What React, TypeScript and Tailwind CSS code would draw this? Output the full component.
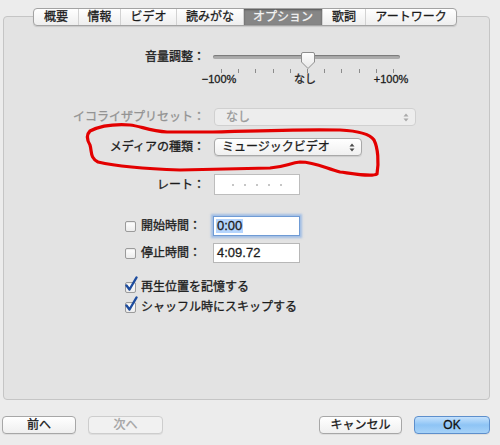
import React from 'react';

const tabs = [
  { label: '概要', w: 'w-[44px]' },
  { label: '情報', w: 'w-[42px]' },
  { label: 'ビデオ', w: 'w-[56px]' },
  { label: '読みがな', w: 'w-[67px]' },
  { label: 'オプション', w: 'w-[79px]', active: true },
  { label: '歌詞', w: 'w-[43px]' },
  { label: 'アートワーク', w: 'w-[91px]' },
];

const Arrows = ({ color }: { color: string }) => (
  <svg width="6" height="9" viewBox="0 0 6 9" className="shrink-0">
    <path d="M3 0.5 L5.5 3.5 H0.5 Z" fill={color} />
    <path d="M3 8.5 L5.5 5.5 H0.5 Z" fill={color} />
  </svg>
);

const Checkbox = ({ checked }: { checked?: boolean }) => (
  <div className="relative w-[11px] h-[11px] shrink-0 rounded-[2px] border border-[#9b9b9b] bg-gradient-to-b from-white to-[#ececec] shadow-[inset_0_1px_1px_rgba(0,0,0,0.08)]">
    {checked && (
      <svg width="14" height="16" viewBox="0 0 14 16" className="absolute -left-[2px] -top-[7px]">
        <path d="M2.5 9.5 L5.5 13.5 L12.5 1.5" fill="none" stroke="#1d4c9e" strokeWidth="2.4" strokeLinecap="round" strokeLinejoin="round" />
      </svg>
    )}
  </div>
);

const Button = ({ children, width, disabled, primary }: { children: React.ReactNode; width: string; disabled?: boolean; primary?: boolean }) => {
  const look = primary
    ? 'border-[#5d8fcc] bg-gradient-to-b from-[#c4e1fc] via-[#8ec4f5] to-[#a6d2f8] text-[#111]'
    : disabled
      ? 'border-[#cdcdcd] bg-[#f1f1f1] text-[#a3a3a3]'
      : 'border-[#a7a7a7] bg-gradient-to-b from-white to-[#efefef] text-[#1a1a1a]';
  return (
    <button className={`${width} h-[18px] rounded-[4px] border ${look} shadow-[0_1px_0_rgba(0,0,0,0.06)] text-[12px] leading-[16px]`}>
      {children}
    </button>
  );
};

export default function App() {
  return (
    <div className="relative w-[500px] h-[445px] overflow-hidden bg-[#ececec] text-[12px] text-[#1c1c1c] [-webkit-text-stroke:0.3px] font-['Liberation_Sans','Noto_Sans_CJK_JP',sans-serif]">
      <div className="pt-[16px] pl-[3px] pr-[10px]">
        <div className="h-[384px] flex flex-col rounded-[4px] border border-[#c5c5c5] bg-[#e3e3e3]">
          {/* tabs */}
          <div className="-mt-[9px] ml-[29px] self-start flex h-[18px] overflow-hidden rounded-[4px] border border-[#a3a3a3] bg-gradient-to-b from-white to-[#eeeeee] shadow-[0_1px_1px_rgba(0,0,0,0.12)]">
            {tabs.map((t, i) => (
              <div
                key={t.label}
                className={`${t.w} h-[16px] flex items-center justify-center leading-[16px] ${i > 0 ? 'border-l border-[#d2d2d2]' : ''} ${t.active ? 'bg-[#868686] text-[#f3f3f3] shadow-[inset_0_1px_2px_rgba(0,0,0,0.35)] border-[#7a7a7a]' : ''}`}
              >
                {t.label}
              </div>
            ))}
          </div>

          {/* volume */}
          <div className="mt-[21px] flex items-start">
            <div className="w-[201px] h-[20px] leading-[20px] text-right">音量調整：</div>
            <div className="relative ml-[8px] w-[200px]">
              <div className="mt-[8px] w-[187px] h-[4px] rounded-full bg-[#ababab] shadow-[inset_0_1px_1px_rgba(0,0,0,0.3)]" />
              <svg width="15" height="18" viewBox="0 0 15 18" className="absolute left-[88px] top-[5px]">
                <defs>
                  <linearGradient id="thumb" x1="0" y1="0" x2="0" y2="1">
                    <stop offset="0" stopColor="#ffffff" />
                    <stop offset="1" stopColor="#e6e6e6" />
                  </linearGradient>
                </defs>
                <path d="M2 0.5 H12 A1.5 1.5 0 0 1 13.5 2 V10 L7 16.5 L0.5 10 V2 A1.5 1.5 0 0 1 2 0.5 Z" fill="url(#thumb)" stroke="#8e8e8e" />
              </svg>
              <div className="mt-[10px] ml-[8px] w-[173px] h-[4px] flex justify-between">
                {Array.from({ length: 11 }).map((_, i) => (
                  <div key={i} className="w-px h-[4px] bg-[#8c8c8c]" />
                ))}
              </div>
              <div className="-ml-[14px] w-[212px] flex justify-between text-[11px] leading-[12px]">
                <span className="w-[40px] text-center">−100%</span>
                <span className="w-[40px] text-center">なし</span>
                <span className="w-[40px] text-center">+100%</span>
              </div>
            </div>
          </div>

          {/* equalizer */}
          <div className="mt-[23px] flex items-center h-[18px]">
            <div className="w-[201px] text-right text-[#939393]">イコライザプリセット：</div>
            <div className="ml-[9px] w-[202px] h-[18px] flex items-center justify-between pl-[11px] pr-[6px] rounded-[4px] border border-[#d0d0d0] bg-[#ededed] text-[#9a9a9a] leading-[16px]">
              <span>なし</span>
              <Arrows color="#a9a9a9" />
            </div>
          </div>

          {/* media kind */}
          <div className="mt-[12px] flex items-center h-[18px]">
            <div className="w-[201px] text-right">メディアの種類：</div>
            <div className="ml-[9px] w-[148px] h-[18px] flex items-center justify-between pl-[7px] pr-[6px] rounded-[4px] border border-[#a9a9a9] bg-gradient-to-b from-white to-[#f0f0f0] shadow-[0_1px_1px_rgba(0,0,0,0.1)] leading-[16px]">
              <span>ミュージックビデオ</span>
              <Arrows color="#4a4a4a" />
            </div>
          </div>

          {/* rating */}
          <div className="mt-[18px] flex items-center h-[21px]">
            <div className="w-[201px] text-right">レート：</div>
            <div className="ml-[9px] w-[86px] h-[21px] flex items-center justify-center gap-[10px] border border-[#bdbdbd] bg-white">
              {Array.from({ length: 5 }).map((_, i) => (
                <div key={i} className="w-[2px] h-[2px] rounded-full bg-[#b3b3b3]" />
              ))}
            </div>
          </div>

          {/* start time */}
          <div className="mt-[21px] flex items-center h-[20px] ml-[121px]">
            <Checkbox />
            <div className="ml-[5px] w-[67px]">開始時間：</div>
            <div className="ml-[5px] w-[87px] h-[20px] flex items-center pl-[2px] border border-[#6f9bd5] bg-white shadow-[0_0_2px_2px_rgba(110,160,230,0.55)] text-[13px]">
              <span className="bg-[#b4d4fd] px-[1px] leading-[14px]">0:00</span>
            </div>
          </div>

          {/* stop time */}
          <div className="mt-[7px] flex items-center h-[20px] ml-[121px]">
            <Checkbox />
            <div className="ml-[5px] w-[67px]">停止時間：</div>
            <div className="ml-[5px] w-[87px] h-[20px] flex items-center pl-[3px] border border-[#b7b7b7] bg-white text-[13px]">
              4:09.72
            </div>
          </div>

          {/* options */}
          <div className="mt-[16px] flex items-center h-[16px] ml-[121px]">
            <Checkbox checked />
            <div className="ml-[5px]">再生位置を記憶する</div>
          </div>
          <div className="mt-[4px] flex items-center h-[16px] ml-[121px]">
            <Checkbox checked />
            <div className="ml-[5px]">シャッフル時にスキップする</div>
          </div>
        </div>
      </div>

      {/* buttons */}
      <div className="mt-[16px] pl-[2px] pr-[10px] flex items-center">
        <Button width="w-[74px]">前へ</Button>
        <div className="ml-[12px]">
          <Button width="w-[75px]" disabled>次へ</Button>
        </div>
        <div className="flex-1" />
        <Button width="w-[83px]">キャンセル</Button>
        <div className="ml-[12px]">
          <Button width="w-[76px]" primary>OK</Button>
        </div>
      </div>

      {/* hand-drawn highlight */}
      <svg width="500" height="445" viewBox="0 0 500 445" className="absolute inset-0 pointer-events-none">
        <path
          d="M90 131 C100 126 115 124 130 125 C140 126 150 131 167 132 L213 132 C250 131 300 129 340 130 C360 131 370 134 374 140 C378 148 379 162 377 174 C372 177 355 174 340 172 C325 168 315 162 300 162 C290 163 285 167 270 168 L180 170 C150 169 115 166 98 162 C90 158 92 152 90 145 C87 140 86 135 90 131 Z"
          fill="none"
          stroke="#e30000"
          strokeWidth="3.2"
          strokeLinejoin="round"
        />
      </svg>
    </div>
  );
}
